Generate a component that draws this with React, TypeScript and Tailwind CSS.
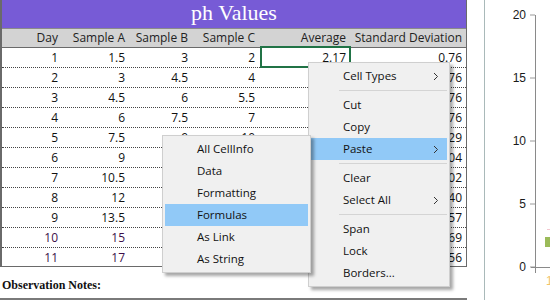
const rows = [
  ["1", "1.5", "3", "2", "2.17", "0.76"],
  ["2", "3", "4.5", "4", "3.83", "0.76"],
  ["3", "4.5", "6", "5.5", "5.33", "0.76"],
  ["4", "6", "7.5", "7", "6.83", "0.76"],
  ["5", "7.5", "9", "10", "8.83", "1.29"],
  ["6", "9", "10.5", "12", "10.50", "1.04"],
  ["7", "10.5", "12", "14", "12.17", "1.02"],
  ["8", "12", "13.5", "16", "13.83", "1.40"],
  ["9", "13.5", "15", "18", "15.50", "1.57"],
  ["10", "15", "16.5", "20", "17.17", "1.69"],
  ["11", "17", "18", "21", "18.67", "1.56"],
];

const headers = ["Day", "Sample A", "Sample B", "Sample C", "Average", "Standard Deviation"];

const cols = "grid grid-cols-[60px_67px_63px_67px_91px_116px]";

function Chevron() {
  return (
    <svg width="6" height="9" viewBox="0 0 6 9" className="shrink-0">
      <path d="M1 1 L4.5 4.5 L1 8" fill="none" stroke="#333" strokeWidth="1" />
    </svg>
  );
}

type Item = { label?: string; sub?: boolean; active?: boolean; sep?: boolean };

const mainMenu: Item[] = [
  { label: "Cell Types", sub: true },
  { sep: true },
  { label: "Cut" },
  { label: "Copy" },
  { label: "Paste", sub: true, active: true },
  { sep: true },
  { label: "Clear" },
  { label: "Select All", sub: true },
  { sep: true },
  { label: "Span" },
  { label: "Lock" },
  { label: "Borders..." },
];

const pasteMenu: Item[] = [
  { label: "All CellInfo" },
  { label: "Data" },
  { label: "Formatting" },
  { label: "Formulas", active: true },
  { label: "As Link" },
  { label: "As String" },
];

function Menu({ items, className }: { items: Item[]; className: string }) {
  return (
    <div
      className={`absolute bg-[#f0f0f0] border border-[#cfcfcf] py-[2px] px-[2px] shadow-[3px_3px_3px_rgba(0,0,0,0.35)] font-['Open_Sans',sans-serif] text-[11.5px] text-[#111] ${className}`}
    >
      {items.map((it, i) =>
        it.sep ? (
          <div key={i} className="h-[7px] flex items-center pl-[28px]">
            <div className="h-px w-full bg-[#d4d4d4]" />
          </div>
        ) : (
          <div
            key={i}
            className={`h-[22px] flex items-center pl-[32px] pr-[8px] ${it.active ? "bg-[#91c9f7]" : ""}`}
          >
            <span className="flex-1">{it.label}</span>
            {it.sub && <Chevron />}
          </div>
        )
      )}
    </div>
  );
}

export default function App() {
  return (
    <div className="relative flex w-[550px] h-[300px] overflow-hidden bg-white">
      <div className="w-[467px] shrink-0 flex flex-col">
        <div className="border-l-2 border-r border-b border-[#6a6a6a] font-['Open_Sans',sans-serif] text-[12px] text-[#111]">
          <div className="h-[29px] bg-[#775bd6] border-b border-[#8a8a8a] flex items-center justify-center">
            <span className="font-['Liberation_Serif',serif] text-[22px] text-white leading-none pb-[2px]">
              ph Values
            </span>
          </div>
          <div className={`${cols} h-[19px] bg-[#d3d3d3] border-b border-[#6a6a6a]`}>
            {headers.map((h) => (
              <div key={h} className="text-right pr-[4px] leading-[18px] whitespace-nowrap text-[#222]">
                {h}
              </div>
            ))}
          </div>
          {rows.map((r, i) => {
            const last = i === rows.length - 1;
            return (
              <div
                key={i}
                className={`${cols} ${last ? "h-[18px]" : "h-[20px] border-b border-dotted border-[#444]"}`}
              >
                {r.map((v, j) => (
                  <div
                    key={j}
                    className={`relative text-right pr-[4px] leading-[19px] ${
                      i >= 9 && j < 2 ? "text-[#3d0f4a]" : ""
                    }`}
                  >
                    {v}
                    {i === 0 && j === 4 && (
                      <div className="absolute -top-[2px] -bottom-[1px] left-px -right-px border-2 border-[#217346]" />
                    )}
                  </div>
                ))}
              </div>
            );
          })}
        </div>
        <div className="mt-[10px] pl-[2px] font-['Liberation_Serif',serif] font-bold text-[12px] leading-[16px] text-[#111]">
          Observation Notes:
        </div>
        <div className="mt-[5px] h-[20px] border border-[#7a7a7a]" />
      </div>

      <div className="w-[17px] shrink-0" />
      <div className="w-px h-full bg-[#a9b9b9] shrink-0" />

      <svg width="65" height="300" viewBox="0 0 65 300" className="shrink-0">
        {[20, 15, 10, 5, 0].map((v, i) => {
          const y = 15 + i * 63;
          return (
            <g key={v}>
              <line x1="45" y1={y} x2="50" y2={y} stroke="#9a9a9a" strokeWidth="1" />
              <text
                x="41"
                y={y + 4}
                textAnchor="end"
                fontFamily="Liberation Sans, Arial, sans-serif"
                fontSize="12"
                fill="#1a1a1a"
              >
                {v}
              </text>
            </g>
          );
        })}
        <line x1="50.5" y1="15" x2="50.5" y2="273" stroke="#8a8a8a" strokeWidth="1" />
        <line x1="46" y1="267.5" x2="65" y2="267.5" stroke="#8a8a8a" strokeWidth="1" />
        <rect x="60" y="237" width="6" height="10" fill="#9bbb59" />
        <line x1="62" y1="229.5" x2="65" y2="229.5" stroke="#f3c6cf" strokeWidth="1" />
        <text x="61" y="285" fontFamily="Liberation Sans, Arial, sans-serif" fontSize="12" fill="#f2c46a">
          1
        </text>
      </svg>

      <Menu items={mainMenu} className="left-[308px] top-[62px] w-[142px]" />
      <Menu items={pasteMenu} className="left-[162px] top-[135px] w-[149px]" />
    </div>
  );
}
